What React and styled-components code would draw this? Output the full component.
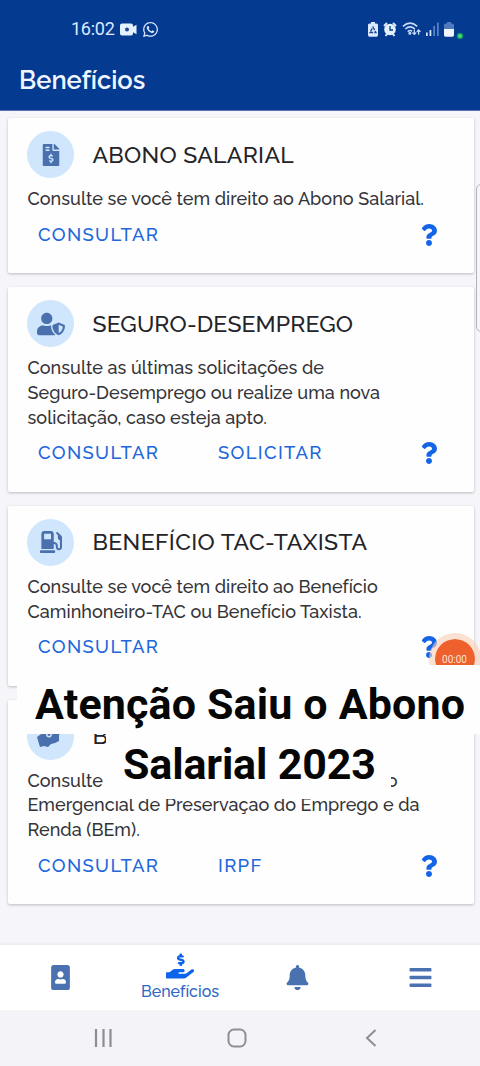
import React from 'react';
import styled, { createGlobalStyle } from 'styled-components';
import {
  FaFileInvoiceDollar, FaUserShield, FaGasPump, FaQuestion,
  FaPortrait, FaHandHoldingUsd, FaBell, FaBars, FaWhatsapp,
} from 'react-icons/fa';

const GlobalStyle = createGlobalStyle`
  * { box-sizing: border-box; }
  body { margin: 0; background: #f6f5f9; }
`;

const Screen = styled.div`
  position: relative;
  width: 480px;
  height: 1066px;
  overflow: hidden;
  display: flex;
  flex-direction: column;
  background: #f6f5f9;
  font-family: Raleway, Lato, sans-serif;
  color: #343438;
`;

const Header = styled.header`
  height: 111px;
  flex: none;
  background: #043b91;
  border-bottom: 1px solid #6470b0;
  color: #f0f6ff;
`;

const StatusBar = styled.div`
  height: 58px;
  padding: 0 18px 0 71px;
  display: flex;
  align-items: center;
  justify-content: space-between;
  color: #dceaff;
`;

const StatusGroup = styled.div`
  display: flex;
  align-items: center;
  gap: ${(p) => p.$gap}px;
`;

const Clock = styled.span`
  font: 400 18px/20px Roboto, sans-serif;
  letter-spacing: -0.25px;
`;

const PageTitle = styled.h1`
  margin: 0;
  padding-left: 19px;
  font-size: 25.5px;
  line-height: 44px;
  font-weight: 600;
`;

const CardList = styled.main`
  flex: 1;
  padding: 7px 6.5px 0 7.5px;
  display: flex;
  flex-direction: column;
  gap: 14px;
`;

const Card = styled.section`
  padding: 13px 20px 0;
  background: #fefefe;
  border-radius: 2px;
  box-shadow: 0 1px 3px rgba(40, 40, 60, 0.28);
`;

const CardHeader = styled.div`
  display: flex;
  align-items: center;
  gap: 18px;
  height: 47px;
`;

const IconCircle = styled.div`
  width: 47px;
  height: 47px;
  margin-left: -0.5px;
  border-radius: 50%;
  background: #cfe6fd;
  color: #4a70ae;
  display: flex;
  align-items: center;
  justify-content: center;
`;

const CardTitle = styled.h2`
  margin: 0 0 0 0.5px;
  font-size: 23px;
  line-height: 30px;
  font-weight: 500;
  color: #242428;
  white-space: nowrap;
  letter-spacing: ${(p) => p.$spacing}px;
`;

const Description = styled.div`
  padding-top: 9px;
`;

const Line = styled.div`
  font-size: 18px;
  font-weight: 500;
  line-height: 24.7px;
  white-space: nowrap;
  display: flex;
  justify-content: space-between;
  letter-spacing: 0.03px;
  width: ${(p) => (p.$width ? `${p.$width}px` : 'auto')};
`;

const Actions = styled.div`
  height: 61.5px;
  padding: 8px 14px 0 10.5px;
  display: flex;
  align-items: flex-start;
`;

const Action = styled.button`
  width: 180px;
  padding: 0;
  border: 0;
  background: none;
  text-align: left;
  font: 500 18.5px/29px Raleway, Lato, sans-serif;
  color: #2066dc;
  letter-spacing: 1.32px;
`;

const Help = styled.span`
  margin: 4px 0 0 auto;
  color: #1464e8;
  line-height: 0;
`;

const TabBar = styled.nav`
  height: 65px;
  flex: none;
  background: #fff;
  box-shadow: 0 -1px 3px rgba(40, 40, 60, 0.07);
  display: grid;
  grid-template-columns: repeat(4, 120px);
  color: #4a72b0;
`;

const Tab = styled.div`
  display: flex;
  flex-direction: column;
  align-items: center;
  justify-content: center;
  color: ${(p) => (p.$active ? '#0b63ee' : 'inherit')};
  padding: 0 ${(p) => p.$shift || 0}px ${(p) => (p.$active ? 3 : 0)}px 0;
`;

const TabLabel = styled.span`
  margin-top: 2px;
  font-size: 16px;
  font-weight: 500;
  line-height: 19px;
  color: #2f68c4;
`;

const SystemBar = styled.footer`
  height: 56px;
  flex: none;
  display: flex;
  align-items: center;
  padding: 0 0 1px 93px;
  background: #f4f3f7;
`;

const HomeKey = styled.svg`
  margin: 0 118px 0 113px;
`;

const EdgeHandle = styled.div`
  position: absolute;
  left: 476px;
  top: 184px;
  width: 12px;
  height: 148px;
  border: 1px solid #b4b4b8;
  border-radius: 5px;
  background: #f6f5f8;
`;

const Recorder = styled.div`
  position: absolute;
  left: 429px;
  top: 633px;
  width: 52px;
  height: 52px;
  border-radius: 50%;
  border: 6px solid rgba(248, 205, 180, 0.6);
  background: #ee602c;
  background-clip: padding-box;
  color: #fbe4d8;
  text-align: center;
  font: 400 10px/41px Roboto, sans-serif;
  text-indent: -1px;
`;

const Caption = styled.div`
  position: absolute;
  left: 17px;
  top: 665px;
  width: 463px;
  display: flex;
  flex-direction: column;
  font: 700 43px/60px Roboto, sans-serif;
  color: #060606;
  white-space: nowrap;
`;

const CaptionFirst = styled.div`
  height: 69px;
  padding: 9px 0 0 18px;
  background: #fefefe;
  letter-spacing: 0.15px;
`;

const CaptionSecond = styled.div`
  width: 285px;
  height: 65px;
  margin-left: 89px;
  padding-left: 17px;
  line-height: 60px;
  background: #fefefe;
  letter-spacing: -0.15px;
`;

const CamIcon = () => (
  <svg width="17" height="13" viewBox="0 0 17 13">
    <path fill="#e6f1ff" d="M2 0.5h9q2 0 2 2v1.2l3.5-2v9.6l-3.5-2v1.2q0 2-2 2H2q-2 0-2-2v-8q0-2 2-2z" />
    <circle cx="7" cy="6.4" r="2" fill="#1d4a94" />
  </svg>
);

const RecycleBattery = () => (
  <svg width="10" height="15" viewBox="0 0 10 15">
    <path fill="#dceaff" d="M3 0h4v1.5h1.5q1.5 0 1.5 1.5v10q0 1.7-1.5 1.7h-7Q0 14.7 0 13V3q0-1.5 1.5-1.5H3z" />
    <path fill="none" stroke="#1d4a94" strokeWidth="1.3" strokeDasharray="3.5 1" d="M5 5L8 10.5H2z" />
  </svg>
);

const AlarmIcon = () => (
  <svg width="14" height="15" viewBox="0 0 14 15">
    <path d="M1 4L4 1M13 4l-3-3M2.5 14l2-2.5M11.5 14l-2-2.5" stroke="#dceaff" strokeWidth="2" />
    <circle cx="7" cy="7.5" r="5.8" fill="#e6f1ff" />
    <path d="M7 4v4h3" fill="none" stroke="#043b91" strokeWidth="1.3" />
  </svg>
);

const WifiIcon = () => (
  <svg width="19" height="16" viewBox="0 0 20 16" fill="none" stroke="#c8dcfa" strokeWidth="1.7">
    <path d="M1 5.2Q8.5-1.5 16 5.2M3.5 8q5-4.3 10 0M6 10.7q2.5-2 4.5-.3" />
    <circle cx="8.3" cy="12.5" r="0.8" fill="#c8dcfa" />
    <path strokeWidth="1.3" d="M13 8.5v5m-2-1.8l2 2 2-2M17.5 14V9.2m-2 1.8l2-2 2 2" />
  </svg>
);

const SignalIcon = () => (
  <svg width="13" height="14" viewBox="0 0 13 14">
    <path fill="#dceaff" d="M0 10.5h1.7V14H0zM3.6 8h1.7v6H3.6z" />
    <path fill="#5b84c4" d="M7.3 4h1.7v10H7.3zM11 .5h1.7V14H11z" />
  </svg>
);

const BatteryIcon = () => (
  <svg width="10" height="15" viewBox="0 0 10 15">
    <path fill="#4f7abd" d="M3 0h4v1.5h1.5Q10 1.5 10 3v5H0V3q0-1.5 1.5-1.5H3z" />
    <path fill="#f2f4fd" d="M0 7h10v6q0 1.7-1.5 1.7h-7Q0 14.7 0 13z" />
  </svg>
);

const CameraDot = styled.span`
  width: 4px;
  height: 4px;
  margin: 13px 0 0 -1px;
  border-radius: 50%;
  background: #35e070;
  box-shadow: 0 0 1px 1px #20a060;
`;

const MoneyIcon = () => (
  <svg width="28" height="24" viewBox="0 0 28 24">
    <path fill="#4a70ae" d="M0 13L11 5l9-3 5 5-3 4v6l-4 2-4 1-3 3-4-1-4 1-1-3z" />
    <ellipse cx="12" cy="9.5" rx="2.3" ry="3.3" fill="none" stroke="#cfe6fd" strokeWidth="1.5" />
  </svg>
);

const cards = [
  {
    title: 'ABONO SALARIAL', spacing: 0.3, icon: <FaFileInvoiceDollar size={22} />,
    lines: ['Consulte se você tem direito ao Abono Salarial.'],
    actions: ['CONSULTAR'],
  },
  {
    title: 'SEGURO-DESEMPREGO', spacing: 0.12, icon: <FaUserShield size={28} />,
    lines: [
      'Consulte as últimas solicitações de',
      'Seguro-Desemprego ou realize uma nova',
      'solicitação, caso esteja apto.',
    ],
    actions: ['CONSULTAR', 'SOLICITAR'],
  },
  {
    title: 'BENEFÍCIO TAC-TAXISTA', spacing: 0.38, icon: <FaGasPump size={22} />,
    lines: [
      'Consulte se você tem direito ao Benefício',
      'Caminhoneiro-TAC ou Benefício Taxista.',
    ],
    actions: ['CONSULTAR'],
  },
  {
    title: 'B', spacing: 0, icon: <MoneyIcon />,
    lines: [
      <><span>Consulte</span><span>o</span></>,
      'Emergencial de Preservação do Emprego e da',
      'Renda (BEm).',
    ],
    actions: ['CONSULTAR', 'IRPF'],
  },
];

export default function App() {
  return (
    <Screen>
      <GlobalStyle />
      <Header>
        <StatusBar>
          <StatusGroup $gap={5}>
            <Clock>16:02</Clock>
            <CamIcon />
            <FaWhatsapp size={17} />
          </StatusGroup>
          <StatusGroup $gap={5}>
            <RecycleBattery />
            <AlarmIcon />
            <WifiIcon />
            <SignalIcon />
            <BatteryIcon />
            <CameraDot />
          </StatusGroup>
        </StatusBar>
        <PageTitle>Benefícios</PageTitle>
      </Header>
      <CardList>
        {cards.map((card, i) => (
          <Card key={i}>
            <CardHeader>
              <IconCircle>{card.icon}</IconCircle>
              <CardTitle $spacing={card.spacing}>{card.title}</CardTitle>
            </CardHeader>
            <Description>
              {card.lines.map((text, j) => (
                <Line key={j} $width={typeof text === 'string' ? 0 : 370}>{text}</Line>
              ))}
            </Description>
            <Actions>
              {card.actions.map((text) => (
                <Action key={text}>{text}</Action>
              ))}
              <Help><FaQuestion size={22} /></Help>
            </Actions>
          </Card>
        ))}
      </CardList>
      <TabBar>
        <Tab><FaPortrait size={25} /></Tab>
        <Tab $active>
          <FaHandHoldingUsd size={28} />
          <TabLabel>Benefícios</TabLabel>
        </Tab>
        <Tab $shift={6}><FaBell size={25} /></Tab>
        <Tab><FaBars size={25} /></Tab>
      </TabBar>
      <SystemBar>
        <svg width="21" height="18" viewBox="0 0 21 18" stroke="#8e8e93" strokeWidth="2.2">
          <path d="M3 0v18M10.5 0v18M17.5 0v18" />
        </svg>
        <HomeKey width="20" height="20" viewBox="0 0 20 20" fill="none" stroke="#8e8e93" strokeWidth="2">
          <rect x="1.5" y="1.5" width="17" height="17" rx="5.5" />
        </HomeKey>
        <svg width="12" height="18" viewBox="0 0 12 18" fill="none" stroke="#8e8e93" strokeWidth="2">
          <path d="M10.5 1L2 9l8.500 8" />
        </svg>
      </SystemBar>
      <EdgeHandle />
      <Recorder>00:00</Recorder>
      <Caption>
        <CaptionFirst>Atenção Saiu o Abono</CaptionFirst>
        <CaptionSecond>Salarial 2023</CaptionSecond>
      </Caption>
    </Screen>
  );
}
